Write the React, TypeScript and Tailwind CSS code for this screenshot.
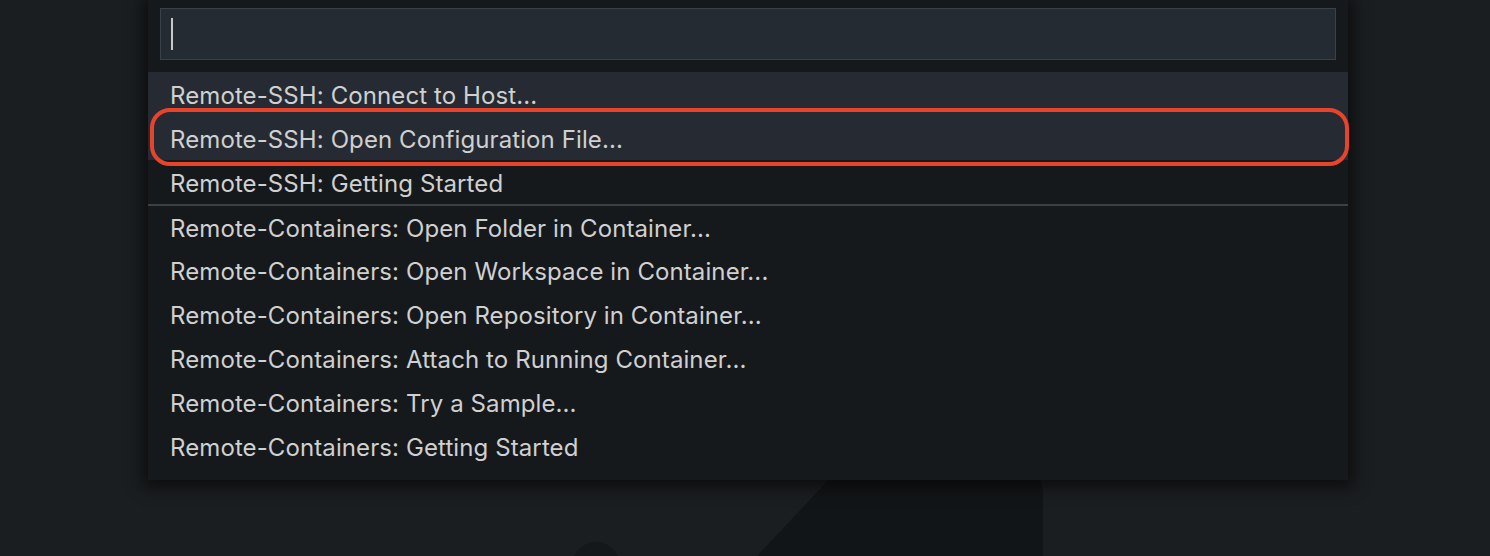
import React from "react";

const sshItems = [
  "Remote-SSH: Connect to Host...",
  "Remote-SSH: Open Configuration File...",
  "Remote-SSH: Getting Started",
];
const containerItems = [
  "Remote-Containers: Open Folder in Container...",
  "Remote-Containers: Open Workspace in Container...",
  "Remote-Containers: Open Repository in Container...",
  "Remote-Containers: Attach to Running Container...",
  "Remote-Containers: Try a Sample...",
  "Remote-Containers: Getting Started",
];

function Row({ t, first }: { t: string; first?: boolean }) {
  return (
    <div
      className={
        first
          ? "h-[42px] flex items-center pt-[4px] pl-[22px] text-[24px] tracking-[0.1px] text-[#d0d0d0]"
          : "h-[44px] flex items-center pt-[3px] pl-[22px] text-[24px] tracking-[0.1px] text-[#d0d0d0]"
      }
    >
      {t}
    </div>
  );
}

export default function App() {
  return (
    <div
      className="relative w-[1490px] h-[556px] overflow-hidden bg-[#1b1e21]"
      style={{ fontFamily: "Inter, 'Noto Sans', sans-serif" }}
    >
      {/* watermark logo shapes */}
      <svg className="absolute left-0 top-0" width="1490" height="556" viewBox="0 0 1490 556">
        <path d="M838 470 L1018 470 Q1043 470 1043 495 L1043 556 L757 556 Z" fill="#121517" />
        <circle cx="596" cy="566" r="24" fill="#15181b" />
      </svg>

      <div className="relative ml-[148px] w-[1200px] bg-[#16191c] pb-[12px] shadow-[0_2px_14px_6px_rgba(0,0,0,0.55)]">
        <div className="pt-[8px] px-[12px] pb-[12px]">
          <div className="h-[52px] border border-[#3a414b] bg-[#252b33] flex items-center pl-[10px]">
            <div className="w-[2px] h-[32px] bg-[#c8c8c8]" />
          </div>
        </div>
        <div className="bg-[#262b33]">
          {sshItems.slice(0, 2).map((t) => (
            <div key={t} className="h-[44px] flex items-center pt-[4px] pl-[22px] text-[24px] tracking-[0.1px] text-[#d0d0d0]">
              {t}
            </div>
          ))}
        </div>
        <div className="h-[44px] flex items-center pt-[4px] pl-[22px] text-[24px] tracking-[0.1px] text-[#d0d0d0]">
          {sshItems[2]}
        </div>
        <div className="h-[2px] bg-[#3c4045]" />
        {containerItems.map((t, i) => (
          <Row key={t} t={t} first={i === 0} />
        ))}
      </div>

      {/* red annotation outline */}
      <div className="absolute left-[150px] top-[108px] w-[1199px] h-[58px] rounded-[20px] border-[4px] border-[#e8432b]" />
    </div>
  );
}
